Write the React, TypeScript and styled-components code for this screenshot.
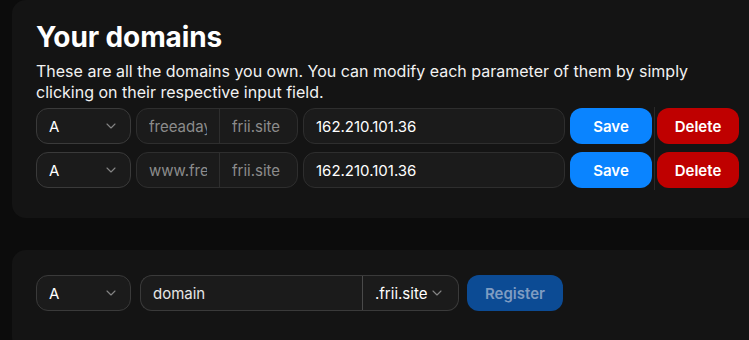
import React from "react";
import styled, { createGlobalStyle } from "styled-components";

const GlobalStyle = createGlobalStyle`
  html, body {
    margin: 0;
    padding: 0;
    background: #0c0c0c;
    overflow: hidden;
  }
  body {
    font-family: Inter, "Noto Sans", sans-serif;
    color: #ffffff;
  }
`;

const Page = styled.div`
  display: flex;
  flex-direction: column;
  gap: 32px;
  padding-left: 12px;
  width: 780px;
`;

const Card = styled.section<{ $pt?: number; $pb?: number }>`
  background: #141414;
  border-radius: 14px;
  padding: ${(p) => p.$pt ?? 20}px 24px ${(p) => p.$pb ?? 30}px 24px;
`;

const Title = styled.h1`
  margin: 0;
  font-size: 28px;
  line-height: 34px;
  font-weight: 700;
  letter-spacing: -0.1px;
`;

const Subtitle = styled.p`
  margin: 7px 0 5px 0;
  font-size: 16px;
  line-height: 21px;
  color: #f2f2f2;
  width: 700px;
`;

const Records = styled.div`
  display: flex;
  align-items: stretch;
`;

const RecordGrid = styled.div`
  display: grid;
  grid-template-columns: 95px 162px 262px 82px;
  grid-auto-rows: 36px;
  column-gap: 5px;
  row-gap: 8px;
`;

const ColumnDivider = styled.div`
  width: 1px;
  margin: -1px 2px -2px 2px;
  background: #2a2a2a;
`;

const ActionColumn = styled.div`
  display: flex;
  flex-direction: column;
  gap: 8px;
`;

const Select = styled.div<{ $w?: number }>`
  display: flex;
  align-items: center;
  justify-content: space-between;
  box-sizing: border-box;
  width: ${(p) => (p.$w ? `${p.$w}px` : "auto")};
  height: 36px;
  padding: 0 14px 0 12px;
  background: #1b1b1b;
  border: 1px solid #3a3a3a;
  border-radius: 12px;
  font-size: 15px;
  color: #ffffff;
`;

const Chevron = () => (
  <svg width="10" height="6" viewBox="0 0 10 6" fill="none">
    <path d="M1 1l4 4 4-4" stroke="#858585" strokeWidth="1.1" strokeLinecap="round" strokeLinejoin="round" />
  </svg>
);

const Group = styled.div`
  display: flex;
  box-sizing: border-box;
  height: 36px;
  background: #1b1b1b;
  border: 1px solid #2e2e2e;
  border-radius: 12px;
  overflow: hidden;
`;

const GroupPart = styled.div<{ $w: number; $divider?: boolean }>`
  width: ${(p) => p.$w}px;
  flex: none;
  box-sizing: border-box;
  display: flex;
  align-items: center;
  padding: 0 12px;
  font-size: 15px;
  color: #8c8c8c;
  border-right: ${(p) => (p.$divider ? "1px solid #2e2e2e" : "none")};
`;

const Clip = styled.span`
  display: block;
  flex: 1;
  min-width: 0;
  overflow: hidden;
  white-space: nowrap;
`;

const Input = styled.div`
  display: flex;
  align-items: center;
  box-sizing: border-box;
  height: 36px;
  padding-left: 12px;
  background: #1b1b1b;
  border: 1px solid #2e2e2e;
  border-radius: 12px;
  font-size: 15px;
  color: #ffffff;
`;

const Button = styled.button<{ $bg: string; $fg?: string; $w?: number }>`
  box-sizing: border-box;
  height: 36px;
  width: ${(p) => (p.$w ? `${p.$w}px` : "auto")};
  border: none;
  border-radius: 12px;
  background: ${(p) => p.$bg};
  color: ${(p) => p.$fg ?? "#ffffff"};
  font-family: inherit;
  font-size: 15px;
  font-weight: 600;
  padding: 0;
`;

const RegisterRow = styled.div`
  display: flex;
  align-items: center;
`;

const Joined = styled.div`
  display: flex;
  margin-left: 9px;
  margin-right: 8px;
`;

const DomainInput = styled.div`
  display: flex;
  align-items: center;
  box-sizing: border-box;
  width: 223px;
  height: 36px;
  padding-left: 12px;
  background: #1b1b1b;
  border: 1px solid #3a3a3a;
  border-right: 1px solid #4a4a4a;
  border-radius: 12px 0 0 12px;
  font-size: 15px;
  color: #e6e6e6;
`;

const SuffixSelect = styled(Select)`
  border-left: none;
  border-radius: 0 12px 12px 0;
  padding-right: 16px;
`;

const records = [
  { type: "A", name: "freeaday", value: "162.210.101.36" },
  { type: "A", name: "www.freeaday", value: "162.210.101.36" },
];

export default function App() {
  return (
    <>
      <GlobalStyle />
      <Page>
        <Card>
          <Title>Your domains</Title>
          <Subtitle>
            These are all the domains you own. You can modify each parameter of them by simply
            clicking on their respective input field.
          </Subtitle>
          <Records>
            <RecordGrid>
              {records.map((r, i) => (
                <React.Fragment key={i}>
                  <Select>
                    {r.type}
                    <Chevron />
                  </Select>
                  <Group>
                    <GroupPart $w={83} $divider>
                      <Clip>{r.name}</Clip>
                    </GroupPart>
                    <GroupPart $w={79}>
                      <Clip>frii.site</Clip>
                    </GroupPart>
                  </Group>
                  <Input>{r.value}</Input>
                  <Button $bg="#0a84ff">Save</Button>
                </React.Fragment>
              ))}
            </RecordGrid>
            <ColumnDivider />
            <ActionColumn>
              {records.map((_, i) => (
                <Button key={i} $bg="#bf0000" $w={82}>
                  Delete
                </Button>
              ))}
            </ActionColumn>
          </Records>
        </Card>
        <Card $pt={25} $pb={40}>
          <RegisterRow>
            <Select $w={95}>
              A
              <Chevron />
            </Select>
            <Joined>
              <DomainInput>domain</DomainInput>
              <SuffixSelect $w={96}>
                .frii.site
                <Chevron />
              </SuffixSelect>
            </Joined>
            <Button $bg="#0c4b94" $fg="#7f9cc2" $w={96}>
              Register
            </Button>
          </RegisterRow>
        </Card>
      </Page>
    </>
  );
}
